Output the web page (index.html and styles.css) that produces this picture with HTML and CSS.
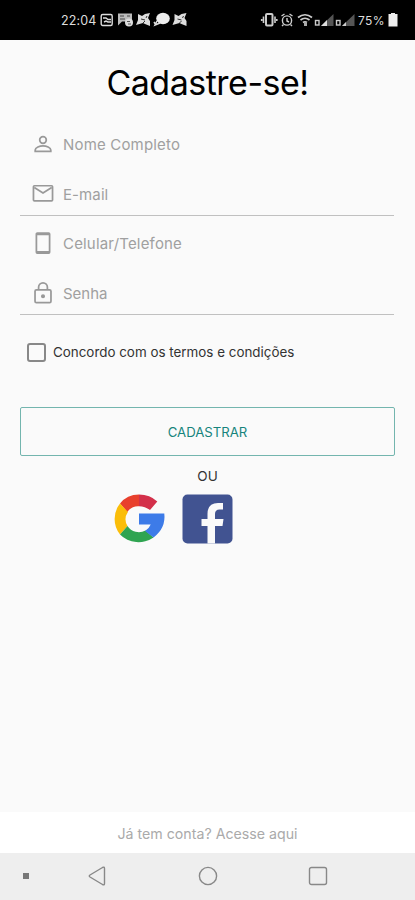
FILE: index.html
```
<!DOCTYPE html>
<html lang="pt-BR">
<head>
<meta charset="utf-8">
<title>Cadastre-se</title>
<link rel="stylesheet" href="styles.css">
</head>
<body>
<header class="status">
  <div class="status-left">
    <span class="clock">22:04</span>
    <svg width="90" height="16" viewBox="0 0 90 16" fill="none" stroke="#ddd" stroke-width="1.4">
      <rect x="1.200" y="2.500" width="11" height="11" rx="1.500"/><path d="M3 6h3l2 1.500h3M4 10l2-1 2 1h3"/>
      <path d="M18 1.500h14v8H22l-4 4z" fill="#bbb" stroke="none"/><path d="M20 4h4M20 7h5M27 4h3" stroke="#444" stroke-width="1"/><circle cx="29" cy="10.500" r="4" fill="#ddd" stroke="none"/><path d="M27 9.500h3M28 12h3" stroke="#555" stroke-width="1"/>
      <g id="bird"><path d="M38 2l4 2 3-2 5-1-2 5 2 3v5l-5-2-2-1-7 2 2-5z" fill="#ddd" stroke="none"/><path d="M41 7l4 1M43 11l2-2M47 4l-1 2" stroke="#333" stroke-width="1"/></g>
      <ellipse cx="63" cy="6.500" rx="6.800" ry="5.700" fill="#eee" stroke="none"/><path d="M57 9l-2 4 5-2M54 10l2 3" stroke-width="1.500"/>
      <use href="#bird" x="36.500"/>
    </svg>
  </div>
  <div class="status-right">
    <svg width="95" height="16" viewBox="0 0 95 16" fill="none" stroke="#ccc" stroke-width="1.400">
      <rect x="5" y="2" width="6.500" height="11.500" rx="1" stroke-width="2"/><path d="M2.500 4.500v6.500M14 4.500v6.500M.7 7v2M15.800 7v2" stroke-width="1.600"/>
      <circle cx="26" cy="8.500" r="4.600"/><path d="M20.500 4l3-2M31.500 4l-3-2M26 6v3l2 1M22.500 12.500l-1.500 1.500M29.500 12.500l1.500 1.500"/>
      <path d="M37 5.500q7-5.500 14 0M39.500 8q4.500-3.500 9 0M42 10.500q2-1.500 4 0" stroke-width="1.700"/><path d="M43 10h3v4h-3z" fill="#aaa" stroke="none"/>
      <path d="M60 14L72.500 2v12z" fill="#555" stroke="none"/><path d="M60 14l6-6v6z" fill="#ddd" stroke="none"/><rect x="54.500" y="8.500" width="3.500" height="4.500"/>
      <path d="M81 14L93.500 2v12z" fill="#555" stroke="none"/><path d="M81 14l4-4v4z" fill="#ccc" stroke="none"/><rect x="75.500" y="8.500" width="3.500" height="4.500"/>
    </svg>
    <span class="percent">75%</span>
    <svg width="10" height="14" viewBox="0 0 10 14"><path d="M3 0h4v1h2.500v12.500H.5V1H3z" fill="#eee"/></svg>
  </div>
</header>
<main>
  <h1>Cadastre-se!</h1>
  <form class="form">
    <div class="field"><svg class="icon" viewBox="0 0 24 24"><circle cx="12" cy="6.500" r="3.600"/><path d="M3.500 19v-1.500c0-3 5-4.500 8.500-4.500s8.500 1.500 8.500 4.500V19z"/></svg><span class="name">Nome Completo</span></div>
    <div class="field line"><svg class="icon" viewBox="0 0 24 24"><rect x="1.600" y="3" width="20.800" height="16.500" rx="1"/><path d="M2.500 5l9.500 6 9.500-6"/></svg><span class="email">E-mail</span></div>
    <div class="field"><svg class="icon" viewBox="0 0 24 24"><rect x="4.800" y="0" width="14.400" height="22" rx="1"/><path d="M5 1.200h14M5 20.800h14" stroke-width="2.400"/></svg><span class="phone">Celular/Telefone</span></div>
    <div class="field line"><svg class="icon" viewBox="0 0 24 24"><rect x="3.300" y="8.500" width="17.400" height="14" rx="1.500"/><path d="M7.200 8V5.800a4.800 4.800 0 0 1 9.600 0V8"/><circle cx="12" cy="15.500" r="1.300" fill="#999"/></svg><span class="password">Senha</span></div>
    <label class="terms"><span class="box"></span><span class="terms-text">Concordo com os termos e condições</span></label>
    <button type="button" class="submit"><span>CADASTRAR</span></button>
  </form>
  <p class="or">OU</p>
  <div class="social">
    <svg width="52" height="50" viewBox="0 0 52 50">
      <path d="M7 9.500Q14 .5 26 .5V12.200A13 13 0 0 0 14.300 18z" fill="#e8402d"/>
      <path d="M26 .5Q37 .5 44.300 7.500L37 16Q32 12.200 26 12.200z" fill="#d3304a"/>
      <path d="M7 9.500L14.900 18A13 13 0 0 0 14.500 32L7 40.500A25 25 0 0 1 7 9.500z" fill="#fabd09"/>
      <path d="M7 40.500L14.500 32A13.500 13.500 0 0 0 32.500 36.500L40.500 43.500A25.500 24.700 0 0 1 7 40.500z" fill="#2fa451"/>
      <path d="M26 19.500H51.300Q53 34 40.500 43.500L32 37Q36.500 34 37.700 30.500H26z" fill="#3d7be8"/>
    </svg>
    <svg width="51" height="50" viewBox="0 0 51 50"><rect x=".5" y=".5" width="50" height="49" rx="5" fill="#415391"/><path d="M25.500 49.500V32h-6v-7h6v-5q0-11 10.500-11h5v6.500h-3.500q-4.500 0-4.500 4.500v5h8.500l-1 7H33v17.500z" fill="#fafafa"/></svg>
  </div>
</main>
<footer class="login"><span>Já tem conta? Acesse aqui</span></footer>
<nav class="nav">
  <i class="dot"></i>
  <svg width="20" height="22" viewBox="0 0 20 22"><path d="M15.500 2.500Q17.500 1.500 17.500 3.500V18.500Q17.500 20.500 15.500 19.500L3 12Q1.500 11 3 10z"/></svg>
  <svg width="20" height="20" viewBox="0 0 20 20"><circle cx="10" cy="10" r="8.600"/></svg>
  <svg width="20" height="20" viewBox="0 0 20 20"><rect x="1.500" y="1.500" width="17" height="17" rx="2"/></svg>
</nav>
</body>
</html>
```
FILE: styles.css
```
* { box-sizing: border-box; }
body { margin: 0; height: 900px; display: flex; flex-direction: column; background: #fafafa; font-family: Inter, "Noto Sans", sans-serif; color: #111; overflow: hidden; }
span { white-space: nowrap; }
svg { display: block; flex: none; overflow: visible; }
.status { height: 40px; flex: none; background: #000; display: flex; justify-content: space-between; align-items: center; padding: 0 17px 0 61px; color: #ddd; font-size: 12.500px; }
.status-left, .status-right { display: flex; align-items: center; }
.clock { width: 39px; letter-spacing: 0.1px; }
.status-right svg:first-child { margin-right: 2px; }
.percent { width: 30px; font-size: 12px; letter-spacing: 0.4px; }
main { flex: 1; padding: 0 20px; }
h1 { margin: 22px 0 0; height: 42px; line-height: 42px; text-align: center; font-size: 34px; font-weight: 400; letter-spacing: -0.5px; color: #000; }
.form { margin-top: 16px; }
.field { height: 49px; display: flex; align-items: center; gap: 9px; padding: 0 12px; color: #a0a0a0; font-size: 15px; font-weight: 400; }
.field.line { height: 47px; padding-top: 4px; margin-bottom: 3px; border-bottom: 1px solid #c0c0c0; width: 374px; }
.name, .phone { letter-spacing: 0.18px; }
.email { letter-spacing: 0.1px; }
.icon { width: 22px; height: 22px; fill: none; stroke: #999; stroke-width: 1.900; }
.terms { display: flex; align-items: center; gap: 7px; height: 20px; margin: 27px 0 0 7px; font-size: 13.400px; color: #333; }
.box { width: 19px; height: 19px; border: 2px solid #888; border-radius: 3px; }
.submit { display: block; width: 375px; height: 49px; margin-top: 45px; border: 1px solid #73b5ae; border-radius: 2px; background: transparent; color: #16847c; font: 400 13.200px Inter, sans-serif; }
.or { margin: 10px 0 0; height: 20px; line-height: 20px; text-align: center; font-size: 13.500px; color: #333; }
.social { display: flex; gap: 17px; margin: 8px 0 0 93px; }
.login { height: 41px; flex: none; background: #fff; display: flex; align-items: center; justify-content: center; padding-top: 2px; color: #aaa; font-size: 14.200px; font-weight: 400; }
.nav { height: 47px; flex: none; background: #eee; display: flex; align-items: center; padding: 0 0 1px 23px; }
.nav svg { fill: none; stroke: #888; stroke-width: 1.400; }
.dot { width: 6px; height: 6px; background: #777; margin-right: 58px; }
.nav svg:nth-of-type(1) { margin-right: 91px; }
.nav svg:nth-of-type(2) { margin-right: 90px; }
```
